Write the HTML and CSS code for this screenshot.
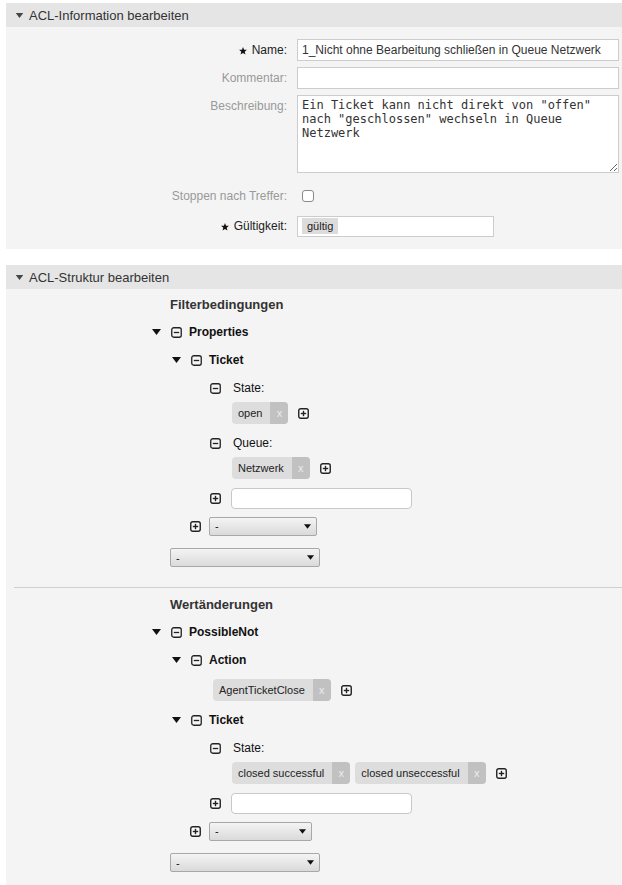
FILE: index.html
```html
<!DOCTYPE html>
<html lang="de">
<head>
<meta charset="utf-8">
<title>ACL bearbeiten</title>
<link rel="stylesheet" href="styles.css">
</head>
<body>
<svg width="0" height="0" class="defs">
  <defs>
    <symbol id="minus" viewBox="0 0 11 11"><rect x="0.75" y="0.75" width="9.5" height="9.5" rx="2" fill="none" stroke="#222" stroke-width="1.3"/><line x1="2.8" y1="5.5" x2="8.2" y2="5.5" stroke="#222" stroke-width="1.3"/></symbol>
    <symbol id="plus" viewBox="0 0 11 11"><rect x="0.75" y="0.75" width="9.5" height="9.5" rx="2" fill="#fafafa" stroke="#222" stroke-width="1.4"/><line x1="2.8" y1="5.5" x2="8.2" y2="5.5" stroke="#222" stroke-width="1.4"/><line x1="5.5" y1="2.8" x2="5.5" y2="8.2" stroke="#222" stroke-width="1.4"/></symbol>
    <symbol id="caret" viewBox="0 0 9 6"><polygon points="0,0 9,0 4.5,6" fill="#111"/></symbol>
    <symbol id="star" viewBox="0 0 10 10"><polygon points="5,0 6.3,3.3 9.9,3.5 7.1,5.8 8.1,9.5 5,7.4 1.9,9.5 2.9,5.8 0.1,3.5 3.7,3.3" fill="#111"/></symbol>
  </defs>
</svg>

<div class="panel">
  <div class="panel-head"><svg class="head-caret"><use href="#caret"/></svg>ACL-Information bearbeiten</div>
  <div class="form-body">
    <div class="frow">
      <label class="lbl req"><svg class="star"><use href="#star"/></svg> Name:</label>
      <input class="text" type="text" value="1_Nicht ohne Bearbeitung schließen in Queue Netzwerk">
    </div>
    <div class="frow">
      <label class="lbl opt">Kommentar:</label>
      <input class="text" type="text" value="">
    </div>
    <div class="frow">
      <label class="lbl opt">Beschreibung:</label>
      <textarea class="area">Ein Ticket kann nicht direkt von "offen" nach "geschlossen" wechseln in Queue Netzwerk</textarea>
    </div>
    <div class="frow frow-check">
      <label class="lbl opt">Stoppen nach Treffer:</label>
      <div class="checkcell"><span class="check"></span></div>
    </div>
    <div class="frow frow-valid">
      <label class="lbl req"><svg class="star"><use href="#star"/></svg> Gültigkeit:</label>
      <div class="valid"><span class="valid-tag">gültig</span></div>
    </div>
  </div>
</div>

<div class="panel panel-2">
  <div class="panel-head"><svg class="head-caret"><use href="#caret"/></svg>ACL-Struktur bearbeiten</div>
  <div class="tree-body">
    <div class="row heading ind-h">Filterbedingungen</div>
    <div class="row node ind-0"><svg class="caret"><use href="#caret"/></svg><svg class="box"><use href="#minus"/></svg><span>Properties</span></div>
    <div class="row node ind-1"><svg class="caret"><use href="#caret"/></svg><svg class="box"><use href="#minus"/></svg><span>Ticket</span></div>
    <div class="row key ind-2"><svg class="box"><use href="#minus"/></svg><span>State:</span></div>
    <div class="vals ind-v">
      <span class="tag"><span class="tag-t">open</span><span class="tag-x">x</span></span>
      <svg class="box add"><use href="#plus"/></svg>
    </div>
    <div class="row key ind-2"><svg class="box"><use href="#minus"/></svg><span>Queue:</span></div>
    <div class="vals ind-v">
      <span class="tag"><span class="tag-t">Netzwerk</span><span class="tag-x">x</span></span>
      <svg class="box add"><use href="#plus"/></svg>
    </div>
    <div class="row addin ind-2"><svg class="box"><use href="#plus"/></svg><span class="newinput"></span></div>
    <div class="row addsel ind-1a"><svg class="box"><use href="#plus"/></svg><span class="sel sel-s"><span>-</span><svg class="sel-arrow"><use href="#caret"/></svg></span></div>
    <div class="bottomsel ind-h"><span class="sel sel-l"><span>-</span><svg class="sel-arrow"><use href="#caret"/></svg></span></div>

    <div class="sep"></div>

    <div class="row heading ind-h">Wertänderungen</div>
    <div class="row node ind-0"><svg class="caret"><use href="#caret"/></svg><svg class="box"><use href="#minus"/></svg><span>PossibleNot</span></div>
    <div class="row node ind-1"><svg class="caret"><use href="#caret"/></svg><svg class="box"><use href="#minus"/></svg><span>Action</span></div>
    <div class="vals vals-action ind-va">
      <span class="tag"><span class="tag-t">AgentTicketClose</span><span class="tag-x">x</span></span>
      <svg class="box add"><use href="#plus"/></svg>
    </div>
    <div class="row node ind-1"><svg class="caret"><use href="#caret"/></svg><svg class="box"><use href="#minus"/></svg><span>Ticket</span></div>
    <div class="row key ind-2"><svg class="box"><use href="#minus"/></svg><span>State:</span></div>
    <div class="vals ind-v">
      <span class="tag"><span class="tag-t">closed successful</span><span class="tag-x">x</span></span>
      <span class="tag"><span class="tag-t">closed unseccessful</span><span class="tag-x">x</span></span>
      <svg class="box add"><use href="#plus"/></svg>
    </div>
    <div class="row addin ind-2"><svg class="box"><use href="#plus"/></svg><span class="newinput"></span></div>
    <div class="row addsel ind-1a"><svg class="box"><use href="#plus"/></svg><span class="sel sel-s2"><span>-</span><svg class="sel-arrow"><use href="#caret"/></svg></span></div>
    <div class="bottomsel ind-h"><span class="sel sel-l"><span>-</span><svg class="sel-arrow"><use href="#caret"/></svg></span></div>
  </div>
</div>
</body>
</html>
```

FILE: styles.css
```css
* { box-sizing: border-box; }

html, body {
  margin: 0;
  background: #fff;
}

body {
  padding-top: 3px;
  font-family: "Liberation Sans", Arial, sans-serif;
  color: #333;
  overflow: hidden;
}

.defs {
  position: absolute;
  width: 0;
  height: 0;
}

.panel {
  margin-left: 6px;
  background: #f4f4f4;
}

.panel-2 {
  margin-top: 16px;
}

.panel-head {
  height: 24px;
  background: #e5e5e5;
  display: flex;
  align-items: center;
  padding-left: 9px;
  font-size: 13px;
  color: #333;
}

.head-caret {
  width: 9px;
  height: 5px;
  margin-right: 5px;
  opacity: 0.75;
}

/* ---------- form ---------- */
.form-body {
  padding: 12px 0 12px 0;
}

.frow {
  display: grid;
  grid-template-columns: 281px 322px;
  column-gap: 10px;
  align-items: start;
  margin-bottom: 6px;
}

.lbl {
  font-size: 12px;
  line-height: 22px;
  text-align: right;
}

.lbl.req { color: #222; }
.lbl.opt { color: #999; }

.star {
  width: 8px;
  height: 8px;
  vertical-align: -1px;
  margin-right: 1px;
}

.text {
  height: 22px;
  width: 322px;
  border: 1px solid #ccc;
  background: #fff;
  padding: 0 4px;
  font-family: "Liberation Sans", Arial, sans-serif;
  font-size: 12px;
  color: #333;
  outline: none;
  margin: 0;
}

.area {
  width: 322px;
  height: 78px;
  border: 1px solid #ccc;
  background: #fff;
  padding: 2px 4px;
  font-family: "DejaVu Sans Mono", monospace;
  font-size: 12px;
  line-height: 14px;
  color: #333;
  margin: 0;
  display: block;
}

.frow-check {
  margin-top: 12px;
  margin-bottom: 9px;
}

.checkcell {
  height: 22px;
  display: flex;
  align-items: center;
  padding-left: 5px;
}

.check {
  width: 12px;
  height: 12px;
  border: 1px solid #8a8a8a;
  border-radius: 3px;
  background: #fff;
  display: block;
}

.frow-valid { margin-bottom: 0; }
.frow-valid .lbl { line-height: 21px; }

.valid {
  width: 197px;
  height: 21px;
  border: 1px solid #ccc;
  background: #fff;
  padding: 1px 4px;
}

.valid-tag {
  display: inline-block;
  height: 16px;
  line-height: 16px;
  padding: 0 5px;
  background: #dcdcdc;
  font-size: 11px;
  color: #222;
  vertical-align: top;
}

/* ---------- tree ---------- */
.tree-body {
  padding: 1px 0 14px 0;
}

.row {
  height: 28px;
  display: flex;
  align-items: center;
}

.heading {
  font-size: 13px;
  font-weight: bold;
  color: #333;
}

.node {
  font-size: 12px;
  font-weight: bold;
  color: #111;
}

.key {
  font-size: 12px;
  color: #111;
}

.ind-h { padding-left: 164px; }
.ind-0 { padding-left: 146px; }
.ind-1 { padding-left: 166px; }
.ind-1a { padding-left: 184px; }
.ind-2 { padding-left: 204px; }
.ind-v { padding-left: 226px; }
.ind-va { padding-left: 207px; }

.caret {
  width: 9px;
  height: 6px;
  margin-right: 10px;
  flex: none;
}

.box {
  width: 11px;
  height: 11px;
  flex: none;
}

.node .box { margin-right: 7px; }
.key .box { margin-right: 12px; }

.vals {
  height: 22px;
  margin-bottom: 5px;
  display: flex;
  align-items: center;
  gap: 5px;
}

.vals-action { margin-top: 5px; }

.vals .add { margin-left: 5px; }

.tag {
  display: inline-flex;
  height: 22px;
  border-radius: 4px;
  overflow: hidden;
  background: #dddddd;
  font-size: 11px;
  line-height: 22px;
  color: #222;
}

.tag-t { padding: 0 8px 0 6px; }

.tag-x {
  width: 18px;
  text-align: center;
  background: #c1c1c1;
  color: #ececec;
}

.addin .box { margin-right: 10px; }

.newinput {
  width: 181px;
  height: 21px;
  border: 1px solid #c8c8c8;
  border-radius: 4px;
  background: #fff;
  display: block;
}

.addsel .box { margin-right: 8px; }

.sel {
  height: 19px;
  border: 1px solid #a8a8a8;
  border-radius: 2px;
  background: linear-gradient(#f4f4f4, #dadada);
  display: flex;
  align-items: center;
  justify-content: space-between;
  padding: 0 5px 0 5px;
  font-size: 11px;
  color: #111;
}

.sel-s { width: 108px; }
.sel-s2 { width: 103px; }
.sel-l { width: 150px; }

.sel-arrow {
  width: 7px;
  height: 7px;
}

.bottomsel {
  margin-top: 8px;
  height: 19px;
  display: flex;
}

.sep {
  margin: 20px 0 2px 8px;
  height: 1px;
  background: #cfcfcf;
}
```
